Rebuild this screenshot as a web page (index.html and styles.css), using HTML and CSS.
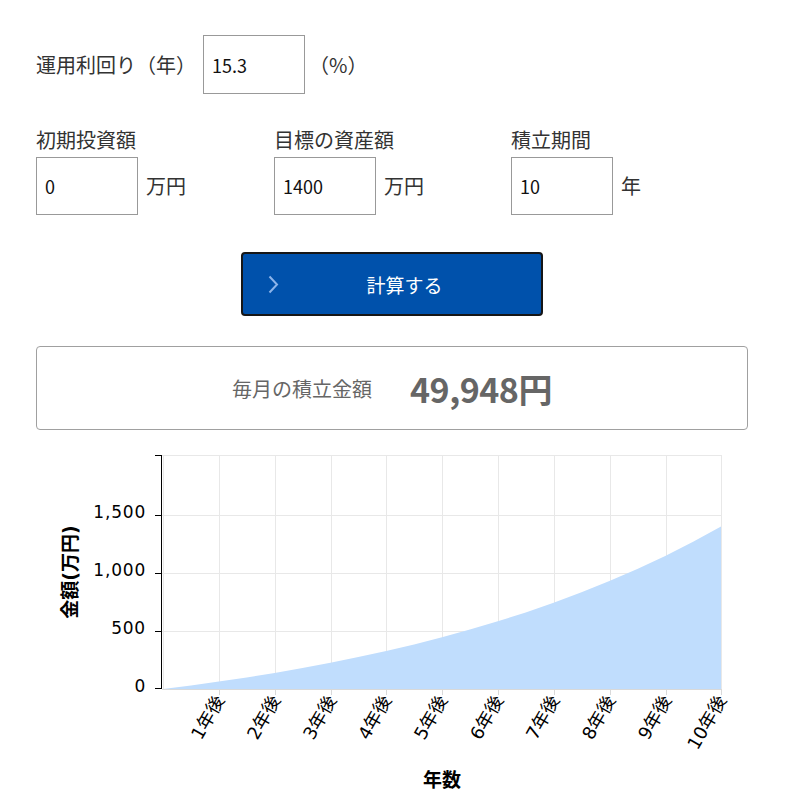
FILE: index.html
```html
<!DOCTYPE html>
<html lang="ja">
<head>
<meta charset="utf-8">
<title>積立シミュレーション</title>
<link rel="stylesheet" href="styles.css">
</head>
<body>
<main class="sim">
  <div class="rate-row">
    <span class="label">運用利回り（年）</span>
    <input class="field" type="text" value="15.3">
    <span class="unit">（%）</span>
  </div>

  <div class="triple">
    <div class="group">
      <div class="label">初期投資額</div>
      <div class="pair">
        <input class="field" type="text" value="0">
        <span class="unit">万円</span>
      </div>
    </div>
    <div class="group">
      <div class="label">目標の資産額</div>
      <div class="pair">
        <input class="field" type="text" value="1400">
        <span class="unit">万円</span>
      </div>
    </div>
    <div class="group">
      <div class="label">積立期間</div>
      <div class="pair">
        <input class="field" type="text" value="10">
        <span class="unit">年</span>
      </div>
    </div>
  </div>

  <div class="btn-wrap">
    <button class="calc-btn" type="button">
      <svg class="chev" width="11" height="19" viewBox="0 0 11 19"><path d="M1.5 1.5 L9 9.5 L1.5 17.5" fill="none" stroke="#8cb4ea" stroke-width="2"/></svg>
      <span class="btn-text">計算する</span>
    </button>
  </div>

  <div class="result">
    <span class="result-label">毎月の積立金額</span>
    <span class="result-value">49,948円</span>
  </div>

  <svg class="chart" width="712" height="365" viewBox="36 430 712 365">
    <g stroke="#e8e8e8" stroke-width="1">
      <line x1="162" y1="455.5" x2="722" y2="455.5"/>
      <line x1="162" y1="515.5" x2="722" y2="515.5"/>
      <line x1="162" y1="573.5" x2="722" y2="573.5"/>
      <line x1="162" y1="631.5" x2="722" y2="631.5"/>
      <line x1="163.5" y1="455" x2="163.5" y2="689"/>
      <line x1="219.5" y1="455" x2="219.5" y2="689"/>
      <line x1="275.5" y1="455" x2="275.5" y2="689"/>
      <line x1="331.5" y1="455" x2="331.5" y2="689"/>
      <line x1="386.5" y1="455" x2="386.5" y2="689"/>
      <line x1="442.5" y1="455" x2="442.5" y2="689"/>
      <line x1="498.5" y1="455" x2="498.5" y2="689"/>
      <line x1="554.5" y1="455" x2="554.5" y2="689"/>
      <line x1="610.5" y1="455" x2="610.5" y2="689"/>
      <line x1="666.5" y1="455" x2="666.5" y2="689"/>
      <line x1="721.5" y1="455" x2="721.5" y2="689"/>
    </g>
    <path d="M163 689 L191 685.5 L218.8 681.5 L246.7 677.4 L274.6 672.9 L302.5 668.0 L330.4 662.7 L358.3 657.1 L386.2 651.0 L414.1 644.4 L442 637.3 L469.9 629.6 L497.8 621.3 L525.7 612.4 L553.6 602.7 L581.5 592.3 L609.4 581.1 L637.3 569.0 L665.2 555.9 L693.1 541.8 L721 526.6 L721 689 Z" fill="#c0ddfd"/>
    <g stroke="#d9d9d9" stroke-width="1">
      <line x1="162" y1="689.5" x2="722" y2="689.5"/>
      <line x1="219.5" y1="689" x2="219.5" y2="695"/>
      <line x1="275.5" y1="689" x2="275.5" y2="695"/>
      <line x1="331.5" y1="689" x2="331.5" y2="695"/>
      <line x1="386.5" y1="689" x2="386.5" y2="695"/>
      <line x1="442.5" y1="689" x2="442.5" y2="695"/>
      <line x1="498.5" y1="689" x2="498.5" y2="695"/>
      <line x1="554.5" y1="689" x2="554.5" y2="695"/>
      <line x1="610.5" y1="689" x2="610.5" y2="695"/>
      <line x1="666.5" y1="689" x2="666.5" y2="695"/>
      <line x1="721.5" y1="689" x2="721.5" y2="695"/>
    </g>
    <g stroke="#000" stroke-width="1">
      <line x1="161.5" y1="455" x2="161.5" y2="689"/>
      <line x1="155" y1="455.5" x2="162" y2="455.5"/>
      <line x1="155" y1="515.5" x2="162" y2="515.5"/>
      <line x1="155" y1="573.5" x2="162" y2="573.5"/>
      <line x1="155" y1="631.5" x2="162" y2="631.5"/>
      <line x1="155" y1="688.5" x2="162" y2="688.5"/>
    </g>
    <g class="ytick" text-anchor="end">
      <text x="146" y="518">1,500</text>
      <text x="146" y="576">1,000</text>
      <text x="146" y="634">500</text>
      <text x="146" y="692">0</text>
    </g>
    <text class="axis-title" transform="translate(77 572) rotate(-90)" text-anchor="middle">金額(万円)</text>
    <g class="xtick" text-anchor="end">
      <text transform="translate(225 700) rotate(-60)">1年後</text>
      <text transform="translate(281 700) rotate(-60)">2年後</text>
      <text transform="translate(337 700) rotate(-60)">3年後</text>
      <text transform="translate(392 700) rotate(-60)">4年後</text>
      <text transform="translate(448 700) rotate(-60)">5年後</text>
      <text transform="translate(504 700) rotate(-60)">6年後</text>
      <text transform="translate(560 700) rotate(-60)">7年後</text>
      <text transform="translate(616 700) rotate(-60)">8年後</text>
      <text transform="translate(672 700) rotate(-60)">9年後</text>
      <text transform="translate(727 700) rotate(-60)">10年後</text>
    </g>
    <text class="axis-title" x="442" y="787" text-anchor="middle">年数</text>
  </svg>
</main>
</body>
</html>
```

FILE: styles.css
```css
html, body {
  margin: 0;
  padding: 0;
  background: #fff;
}

body {
  font-family: "Noto Sans CJK JP", "Noto Sans", sans-serif;
  color: #333;
}

.sim {
  width: 712px;
  margin-left: 36px;
  padding-top: 35px;
}

.label, .unit {
  font-size: 20px;
  line-height: 30px;
  color: #333;
}

.field {
  box-sizing: border-box;
  width: 102px;
  height: 59px;
  border: 1px solid #999;
  border-radius: 0;
  padding: 0 8px;
  margin: 0;
  font-family: "Noto Sans CJK JP", "Noto Sans", sans-serif;
  font-size: 18px;
  color: #111;
  background: #fff;
  outline: none;
}

.rate-row {
  display: flex;
  align-items: center;
  height: 59px;
}

.rate-row .field {
  margin-left: 7px;
}

.rate-row .unit {
  margin-left: 4px;
}

.triple {
  display: grid;
  grid-template-columns: 238px 237px 237px;
  margin-top: 31px;
}

.group .label {
  margin-bottom: 2px;
}

.pair {
  display: flex;
  align-items: center;
  gap: 8px;
}

.pair .field {
  height: 58px;
}

.btn-wrap {
  display: flex;
  justify-content: center;
  margin-top: 37px;
}

.calc-btn {
  box-sizing: border-box;
  width: 302px;
  height: 64px;
  display: flex;
  align-items: center;
  padding: 0 11px 0 25px;
  background: #0051ab;
  border: 2px solid #161616;
  border-radius: 4px;
  color: #fff;
  font-family: "Noto Sans CJK JP", "Noto Sans", sans-serif;
  font-size: 19px;
  cursor: pointer;
}

.chev {
  flex: none;
}

.btn-text {
  flex: 1;
  text-align: center;
}

.result {
  box-sizing: border-box;
  margin-top: 30px;
  height: 84px;
  border: 1px solid #a0a0a0;
  border-radius: 4px;
  display: flex;
  align-items: center;
  justify-content: center;
  gap: 38px;
  color: #666;
}

.result-label {
  font-size: 20px;
  color: #666;
}

.result-value {
  font-size: 34px;
  font-weight: bold;
  color: #666;
  letter-spacing: -0.5px;
}

.chart {
  display: block;
  overflow: visible;
}

.ytick text, .xtick text {
  font-family: "DejaVu Sans", "Noto Sans CJK JP", sans-serif;
  font-size: 18px;
  fill: #000;
}

.ytick text {
  font-size: 17px;
  letter-spacing: 0.8px;
}

.axis-title {
  font-family: "DejaVu Sans", "Noto Sans CJK JP", sans-serif;
  font-size: 19px;
  font-weight: bold;
  fill: #000;
}
```
